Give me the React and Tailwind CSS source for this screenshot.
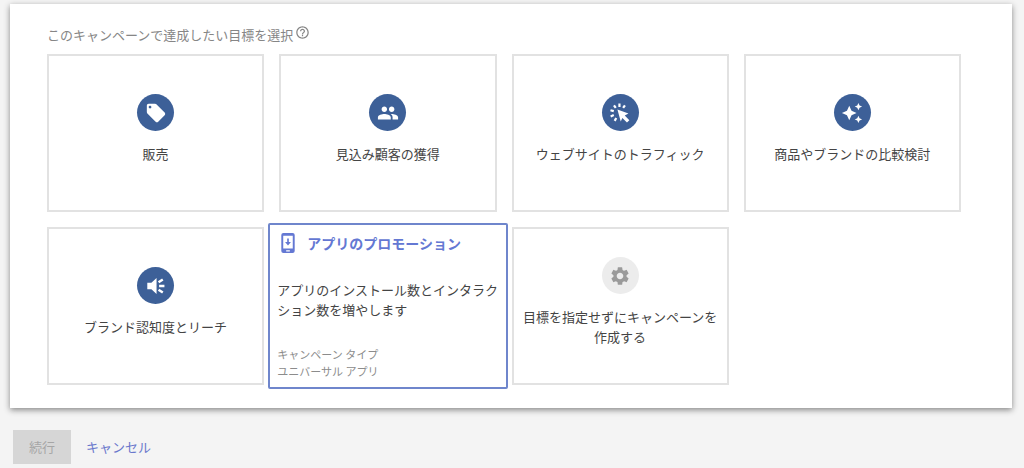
import React from "react";
import { MdAutoAwesome, MdHelpOutline, MdLocalOffer, MdPeople, MdSettings } from "react-icons/md";

const ClickIcon = ({ className }) => (
  <svg viewBox="0 0 24 24" className={className} aria-hidden="true">
    <path
      d="M9.2 8.2l12 4.4-4 2.2 5 5-2.6 2.6-5-5-1.8 4z"
      fill="currentColor"
    />
    <path
      d="M11.4 1.6v3.8M5.4 3.6l2 2.9M17.4 3.6l-2 2.9M1.6 9l3.6 1M1.8 15.8l3.4-1.5M6.2 20.6l1.7-3.1"
      fill="none"
      stroke="currentColor"
      strokeWidth="2.4"
    />
  </svg>
);

const SpeakerIcon = ({ className }) => (
  <svg viewBox="0 0 24 24" className={className} aria-hidden="true">
    <path d="M2.5 8.4v7.2H7l5.6 5.2V3.2L7 8.4z" fill="currentColor" />
    <path
      d="M14.8 8l4.6-3.2M15.4 12h5.8M14.8 16l4.6 3.2"
      fill="none"
      stroke="currentColor"
      strokeWidth="2.6"
    />
  </svg>
);

const PhoneDownloadIcon = ({ className }) => (
  <svg viewBox="0 0 24 24" className={className} aria-hidden="true">
    <path
      fillRule="evenodd"
      d="M7 1h10a2.3 2.3 0 0 1 2.3 2.3v17.4A2.3 2.3 0 0 1 17 23H7a2.3 2.3 0 0 1-2.3-2.3V3.3A2.3 2.3 0 0 1 7 1zM6.8 4v14h10.4V4zM10 20v1.2h4V20z"
      fill="currentColor"
    />
    <path d="M11.1 7h1.8v4h2.3L12 14.6 8.8 11h2.3z" fill="currentColor" />
  </svg>
);

const goals = [
  { id: "sales", label: "販売", icon: MdLocalOffer },
  { id: "leads", label: "見込み顧客の獲得", icon: MdPeople },
  { id: "traffic", label: "ウェブサイトのトラフィック", icon: ClickIcon },
  { id: "consideration", label: "商品やブランドの比較検討", icon: MdAutoAwesome },
  { id: "awareness", label: "ブランド認知度とリーチ", icon: SpeakerIcon },
  {
    id: "app",
    label: "アプリのプロモーション",
    icon: PhoneDownloadIcon,
    description: "アプリのインストール数とインタラクション数を増やします",
    types: "ユニバーサル アプリ",
  },
  {
    id: "none",
    label: "目標を指定せずにキャンペーンを作成する",
    icon: MdSettings,
    muted: true,
  },
];

const GoalCard = ({ goal }) => {
  const Icon = goal.icon;
  return (
    <button
      type="button"
      className="flex flex-col items-center justify-center gap-[13px] border-2 border-[#e2e2e2] bg-white px-2 pb-2 text-[#444]"
    >
      <span
        className={
          goal.muted
            ? "flex size-[37px] items-center justify-center rounded-full bg-[#ececec] text-[#9a9a9a]"
            : "flex size-[37px] items-center justify-center rounded-full bg-[#3d6098] text-white"
        }
      >
        <Icon className="size-[22px]" />
      </span>
      <span className="leading-5">{goal.label}</span>
    </button>
  );
};

// The expanded card grows over the gaps around its grid cell
const ExpandedGoalCard = ({ goal }) => {
  const Icon = goal.icon;
  return (
    <button
      type="button"
      className="z-10 -mx-[11px] -my-1 flex flex-col items-start rounded-xs border-2 border-[#6f86cc] bg-white px-[7px] pt-[7px] text-left"
    >
      <span className="flex items-center gap-2 text-sm leading-5 font-bold text-[#6478d3]">
        <Icon className="size-[22px]" />
        {goal.label}
      </span>
      <span className="mt-[26px] leading-5 text-[#444]">{goal.description}</span>
      <span className="mt-[26px] text-[11px] leading-[17px] text-[#8c8c8c]">
        キャンペーン タイプ
        <br />
        {goal.types}
      </span>
    </button>
  );
};

const App = () => {
  return (
    <main className="min-h-screen bg-[#f4f4f4] pt-1 pr-3 pl-[10px] font-['Noto_Sans_CJK_JP',sans-serif] text-[13px]">
      <section className="bg-white pt-[21px] pr-[51px] pb-[23px] pl-[37px] shadow-[0_2px_6px_rgba(0,0,0,0.45)]">
        <div className="mb-[9px] flex gap-[2px] text-[#868686]">
          <h1 className="leading-5">このキャンペーンで達成したい目標を選択</h1>
          <MdHelpOutline className="size-[15px]" />
        </div>
        <div className="grid auto-rows-[158px] grid-cols-4 gap-[15px]">
          {goals.map((goal) =>
            goal.description ? (
              <ExpandedGoalCard key={goal.id} goal={goal} />
            ) : (
              <GoalCard key={goal.id} goal={goal} />
            )
          )}
        </div>
      </section>
      <div className="mt-[22px] flex items-center gap-[15px] pl-[3px]">
        <button type="button" disabled className="bg-[#d6d6d6] px-4 py-[7px] leading-5 text-[#a6a6a6]">
          続行
        </button>
        <button type="button" className="leading-5 text-[#6a78cc]">
          キャンセル
        </button>
      </div>
    </main>
  );
};

export default App;
